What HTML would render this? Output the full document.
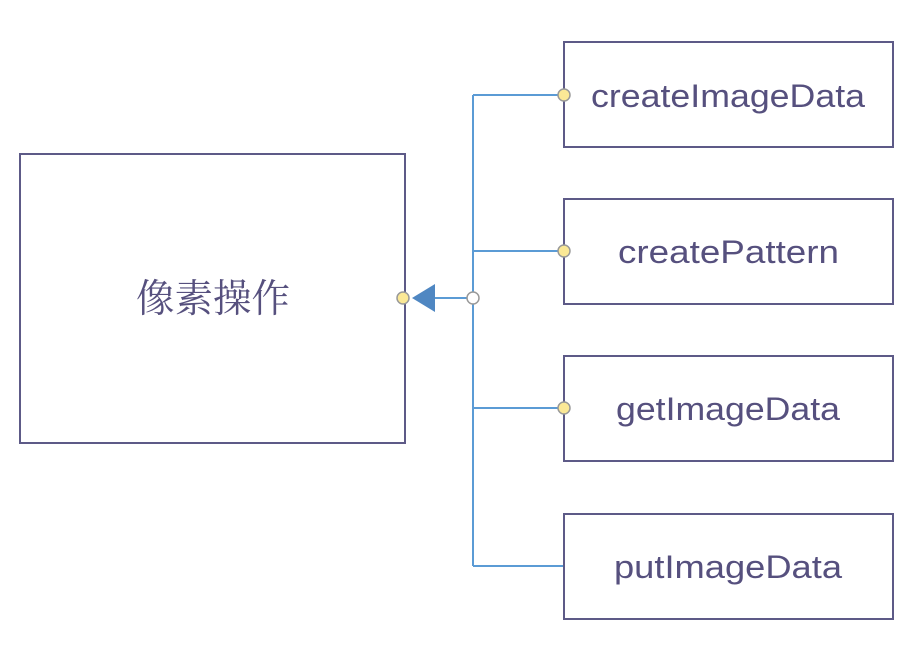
<!DOCTYPE html>
<html><head><style>body{margin:0;background:#fff}</style></head><body>
<svg width="907" height="640" xmlns="http://www.w3.org/2000/svg">
<g fill="none" stroke="#5b9bd5" stroke-width="2">
<path d="M473 95V566M473 95H564M473 251H564M473 408H564M473 566H564M473 298H433"/>
</g>
<g fill="#fff" stroke="#5d5a87" stroke-width="2">
<rect x="20" y="154" width="385" height="289"/>
<rect x="564" y="42" width="329" height="105"/>
<rect x="564" y="199" width="329" height="105"/>
<rect x="564" y="356" width="329" height="105"/>
<rect x="564" y="514" width="329" height="105"/>
</g>
<polygon points="412,298 435,284 435,312" fill="#4f87c2"/>
<g stroke="#999" stroke-width="1.5">
<circle cx="403" cy="298" r="6" fill="#fbe896"/>
<circle cx="473" cy="298" r="6" fill="#fff"/>
<circle cx="564" cy="95" r="6" fill="#fbe896"/>
<circle cx="564" cy="251" r="6" fill="#fbe896"/>
<circle cx="564" cy="408" r="6" fill="#fbe896"/>
</g>
<g fill="#56507e" font-family="Liberation Sans, sans-serif" font-size="32" lengthAdjust="spacingAndGlyphs">
<text x="136" y="312" font-family="Noto Serif CJK SC, serif" font-size="39" textLength="154" lengthAdjust="spacingAndGlyphs">像素操作</text>
<text x="591" y="107" textLength="274" lengthAdjust="spacingAndGlyphs">createImageData</text>
<text x="618" y="263" textLength="221" lengthAdjust="spacingAndGlyphs">createPattern</text>
<text x="616" y="420" textLength="224" lengthAdjust="spacingAndGlyphs">getImageData</text>
<text x="614" y="578" textLength="228" lengthAdjust="spacingAndGlyphs">putImageData</text>
</g>
</svg>
</body></html>
